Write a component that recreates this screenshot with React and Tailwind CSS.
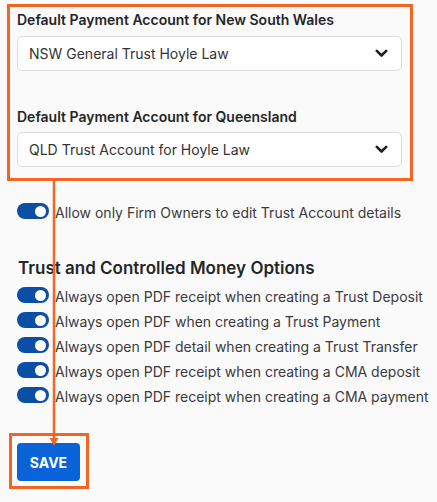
import React from 'react';

const Toggle = () => (
    <span className="relative inline-flex h-4 w-8 shrink-0 items-center rounded-full bg-[#0b4ea6]">
        <span className="absolute right-[3px] h-[11px] w-[11px] rounded-full bg-white" />
    </span>
);

const Chevron = () => (
    <svg width="13" height="9" viewBox="0 0 13 9" fill="none">
        <path d="M1.8 1.8 L6.5 6.5 L11.2 1.8" stroke="#1f1f1f" strokeWidth="2.6" strokeLinecap="round" strokeLinejoin="round" />
    </svg>
);

const Select = ({ value }) => (
    <div className="flex h-[35px] items-center justify-between rounded-[5px] border border-[#dcdcdc] bg-white pl-[11px] pr-[13px] text-[14px] text-[#333]">
        <span>{value}</span>
        <Chevron />
    </div>
);

const options = [
    'Always open PDF receipt when creating a Trust Deposit',
    'Always open PDF when creating a Trust Payment',
    'Always open PDF detail when creating a Trust Transfer',
    'Always open PDF receipt when creating a CMA deposit',
    'Always open PDF receipt when creating a CMA payment',
];

export default function App() {
    return (
        <div
            className="relative h-[502px] w-[437px] overflow-hidden bg-[#fafafa] pt-[4px]"
            style={{ fontFamily: 'Inter, "Noto Sans", sans-serif' }}
        >
            {/* Payment accounts (highlighted) */}
            <div className="ml-[7px] w-[406px] border-[3px] border-[#f26522] pl-[7px] pr-[8px] pt-[3px] pb-[11px]">
                <div className="text-[14px] leading-5 font-semibold text-[#262626]">Default Payment Account for New South Wales</div>
                <div className="mt-[6px]">
                    <Select value="NSW General Trust Hoyle Law" />
                </div>
                <div className="mt-[36px] text-[14px] leading-5 font-semibold text-[#262626]">Default Payment Account for Queensland</div>
                <div className="mt-[5px]">
                    <Select value="QLD Trust Account for Hoyle Law" />
                </div>
            </div>

            <div className="mt-[22px] flex h-4 items-center gap-[6px] pl-[17px] text-[14px] text-[#3b3b3b]">
                <Toggle />
                <span className="pt-[3px]">Allow only Firm Owners to edit Trust Account details</span>
            </div>

            {/* Trust and Controlled Money Options */}
            <h2 className="mt-[37px] pl-[18px] text-[17px] leading-6 font-semibold text-[#262626]">Trust and Controlled Money Options</h2>
            <div className="mt-[7px] flex flex-col gap-[9px] pl-[17px]">
                {options.map((o) => (
                    <div key={o} className="flex h-4 items-center gap-[6px] text-[14px] text-[#3b3b3b]">
                        <Toggle />
                        <span className="pt-[2px]">{o}</span>
                    </div>
                ))}
            </div>

            {/* Save (highlighted) */}
            <div className="mt-[30px] ml-[9px] w-[80px] border-[3px] border-[#f26522] pl-[5px] pt-[7px] pb-[5px]">
                <button className="flex h-[38px] w-[63px] items-center justify-center rounded-[4px] bg-[#0a63d8] text-[14px] font-bold text-white">
                    SAVE
                </button>
            </div>

            {/* Annotation arrow */}
            <svg className="pointer-events-none absolute left-0 top-0" width="437" height="502">
                <line x1="54" y1="181" x2="54" y2="440" stroke="#f26522" strokeWidth="2.5" />
                <polygon points="49.5,438 58.5,438 54,446" fill="#f26522" />
            </svg>
        </div>
    );
}
